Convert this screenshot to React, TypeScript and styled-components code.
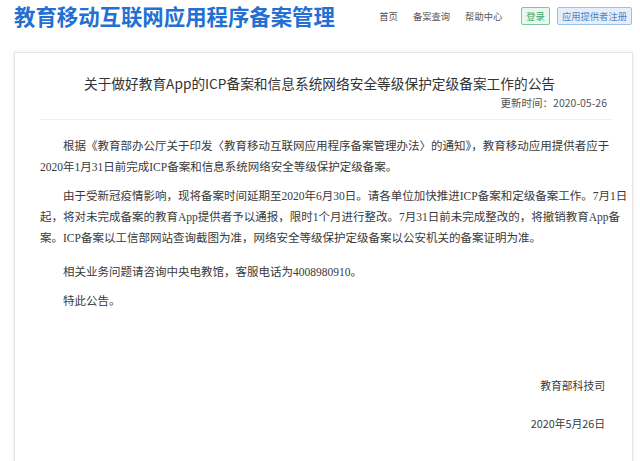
import styled, { createGlobalStyle } from "styled-components";

const GlobalStyle = createGlobalStyle`
  html, body {
    margin: 0;
    padding: 0;
    background: #ffffff;
  }
  body {
    font-family: "Noto Sans CJK SC", "Noto Sans", sans-serif;
    color: #333;
  }
`;

const Page = styled.div`
  width: 640px;
  height: 461px;
  overflow: hidden;
  background: #fff;
`;

const Header = styled.div`
  height: 33px;
  display: flex;
  align-items: center;
  justify-content: space-between;
  padding: 0 8px 0 14px;
`;

const Logo = styled.div`
  font-family: "Noto Sans CJK SC", sans-serif;
  font-size: 21.4px;
  font-weight: 700;
  color: #2370d2;
  line-height: 1;
  margin-top: -2px;
`;

const Nav = styled.div`
  display: flex;
  align-items: center;
  margin-top: -2px;
`;

const NavLink = styled.a`
  font-size: 9.3px;
  color: #555;
  margin-right: 15px;
  text-decoration: none;
  cursor: pointer;
`;

const HeadButton = styled.a<{ $tone: "green" | "blue" }>`
  display: inline-flex;
  align-items: center;
  height: 16px;
  padding: 0 4px;
  font-size: 9.3px;
  margin-left: ${({ $tone }) => ($tone === "green" ? "4px" : "7px")};
  color: ${({ $tone }) => ($tone === "green" ? "#3aa56b" : "#4a86c8")};
  background: ${({ $tone }) => ($tone === "green" ? "#e9f7ef" : "#e5effa")};
  border: 1px solid ${({ $tone }) => ($tone === "green" ? "#7dc79f" : "#9cbfe3")};
  border-radius: 2px;
  cursor: pointer;
`;

const Card = styled.div`
  margin: 19px 7px 0 14px;
  border: 1px solid #e4e4e4;
  box-shadow: 0 0 4px rgba(0, 0, 0, 0.08);
  background: #fff;
  padding: 0 19px 40px 25px;
  min-height: 420px;
`;

const Title = styled.h1`
  margin: 0;
  padding: 20px 14px 0 0;
  text-align: center;
  font-size: 13.7px;
  line-height: 20px;
  font-weight: 400;
  color: #333;
`;

const Updated = styled.div`
  text-align: right;
  font-size: 10.5px;
  line-height: 16px;
  color: #555;
  padding-right: 6px;
  margin-top: 2px;
  padding-bottom: 8px;
  border-bottom: 1px solid #f1f1f1;
`;

const Body = styled.div`
  padding-top: 16px;
  font-family: "Liberation Serif", "Noto Sans CJK SC", serif;
  font-size: 11.5px;
  line-height: 21px;
  color: #3a3a3a;
`;

const Para = styled.p<{ $after?: number }>`
  margin: 0 0 ${({ $after }) => $after ?? 8}px 0;
  text-indent: 23px;
  white-space: nowrap;
`;

const Sign = styled.div<{ $gap: number }>`
  text-align: right;
  font-size: 10.8px;
  line-height: 21px;
  color: #3a3a3a;
  padding-right: 8px;
  margin-top: ${({ $gap }) => $gap}px;
`;

export default function App() {
  return (
    <Page>
      <GlobalStyle />
      <Header>
        <Logo>教育移动互联网应用程序备案管理</Logo>
        <Nav>
          <NavLink>首页</NavLink>
          <NavLink>备案查询</NavLink>
          <NavLink>帮助中心</NavLink>
          <HeadButton $tone="green">登录</HeadButton>
          <HeadButton $tone="blue">应用提供者注册</HeadButton>
        </Nav>
      </Header>
      <Card>
        <Title>关于做好教育App的ICP备案和信息系统网络安全等级保护定级备案工作的公告</Title>
        <Updated>更新时间：2020-05-26</Updated>
        <Body>
          <Para>
            根据《教育部办公厅关于印发〈教育移动互联网应用程序备案管理办法〉的通知》，教育移动应用提供者应于
            <br />
            2020年1月31日前完成ICP备案和信息系统网络安全等级保护定级备案。
          </Para>
          <Para $after={13}>
            由于受新冠疫情影响，现将备案时间延期至2020年6月30日。请各单位加快推进ICP备案和定级备案工作。7月1日
            <br />
            起，将对未完成备案的教育App提供者予以通报，限时1个月进行整改。7月31日前未完成整改的，将撤销教育App备
            <br />
            案。ICP备案以工信部网站查询截图为准，网络安全等级保护定级备案以公安机关的备案证明为准。
          </Para>
          <Para>相关业务问题请咨询中央电教馆，客服电话为4008980910。</Para>
          <Para>特此公告。</Para>
        </Body>
        <Sign $gap={63}>教育部科技司</Sign>
        <Sign $gap={17}>2020年5月26日</Sign>
      </Card>
    </Page>
  );
}
